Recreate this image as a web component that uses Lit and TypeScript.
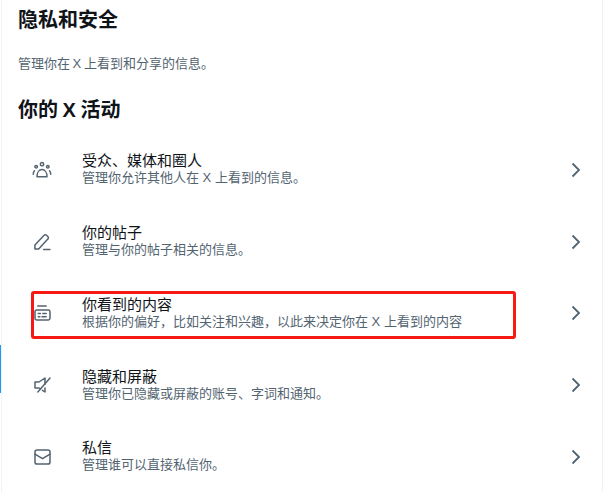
import { LitElement, html, css, svg } from 'lit';
import { customElement } from 'lit/decorators.js';

const ICONS = {
  people: svg`<circle cx="12" cy="5" r="2"/><circle cx="5" cy="8" r="1.5"/><circle cx="19" cy="8" r="1.5"/><path d="M6 20c0-5 2.500-8.500 6-8.500s6 3.500 6 8.500z"/><path d="M1.500 17c0-1.500.5-3 1.500-4M22.500 17c0-1.500-.5-3-1.500-4"/>`,
  pen: svg`<path d="M3.500 20.500v-5L14.500 4a2 2 0 0 1 3 0l1.500 1.500a2 2 0 0 1 0 3L8 20.500z"/><path d="M14 21h7.500"/>`,
  card: svg`<path d="M7 3.600h10"/><rect x="3.600" y="8.400" width="18" height="12" rx="2"/><path d="M7.500 12.500h2.500M7.500 16.500h2M13 12.500h4M12 16.500h5"/>`,
  mute: svg`<path d="M15.600 11V3.600L8.400 8.400H3.600v7.200h4.800l1.800 1.200"/><path d="M21.600 3.600L7 20.400M15.600 15.600v4.800l-3-2"/>`,
  mail: svg`<rect x="3.600" y="3.600" width="18" height="16.800" rx="2.500"/><path d="M3.600 8.500l9 5.500 9-5.500"/>`,
};

const ROWS = [
  { icon: ICONS.people, title: '受众、媒体和圈人', sub: '管理你允许其他人在 X 上看到的信息。' },
  { icon: ICONS.pen, title: '你的帖子', sub: '管理与你的帖子相关的信息。' },
  { icon: ICONS.card, title: '你看到的内容', sub: '根据你的偏好，比如关注和兴趣，以此来决定你在 X 上看到的内容' },
  { icon: ICONS.mute, title: '隐藏和屏蔽', sub: '管理你已隐藏或屏蔽的账号、字词和通知。' },
  { icon: ICONS.mail, title: '私信', sub: '管理谁可以直接私信你。' },
];

@customElement('app-root')
export class AppRoot extends LitElement {
  static styles = css`
    :host {
      display: block;
      position: relative;
      width: 612px;
      height: 492px;
      overflow: hidden;
      background: #fff;
      font-family: 'Liberation Sans', 'Noto Sans CJK SC', sans-serif;
    }
    .panel {
      box-sizing: border-box;
      width: 602px;
      height: 492px;
      margin-left: 1px;
      border-left: 1px solid #eff3f4;
      border-right: 1px solid #eff3f4;
      padding-top: 7px;
    }
    h1, h2 {
      margin: 0;
      padding-left: 16px;
      font-size: 20px;
      line-height: 26px;
      font-weight: 700;
      color: #0f1419;
      word-spacing: -1px;
    }
    .intro {
      margin: 0;
      padding: 22px 0 0 16px;
      font-size: 13px;
      line-height: 18px;
      color: #536471;
      word-spacing: -1px;
    }
    h2 { margin-top: 24px; }
    .rows { margin-top: 11px; }
    .row {
      display: flex;
      align-items: center;
      height: 71.750px;
      padding: 0 18px 0 30px;
    }
    .icon {
      width: 20px;
      height: 20px;
      fill: none;
      stroke: #536471;
      stroke-width: 1.800;
      stroke-linejoin: round;
      stroke-linecap: round;
      flex: none;
    }
    .text { flex: 1; margin: 0 0 1px 30px; }
    .title { font-size: 15px; line-height: 18px; color: #0f1419; }
    .sub { font-size: 13px; line-height: 16px; color: #536471; }
    .chev {
      width: 16px;
      height: 16px;
      fill: none;
      stroke: #536471;
      stroke-width: 1.800;
      flex: none;
    }
    .mark {
      position: absolute;
      left: 31px;
      top: 291px;
      width: 485px;
      height: 48px;
      box-sizing: border-box;
      border: 3px solid #f51a14;
      border-radius: 3px;
    }
    .tab {
      position: absolute;
      left: 0;
      top: 345px;
      width: 1px;
      height: 48px;
      background: #1d9bf0;
    }
  `;

  render() {
    return html`
      <div class="panel">
        <h1>隐私和安全</h1>
        <p class="intro">管理你在 X 上看到和分享的信息。</p>
        <h2>你的 X 活动</h2>
        <div class="rows">
          ${ROWS.map(r => html`
            <div class="row">
              <svg class="icon" viewBox="0 0 24 24">${r.icon}</svg>
              <div class="text">
                <div class="title">${r.title}</div>
                <div class="sub">${r.sub}</div>
              </div>
              <svg class="chev" viewBox="0 0 16 16"><path d="M4.500 1.500L11 8l-6.500 6.500"/></svg>
            </div>
          `)}
        </div>
      </div>
      <div class="tab"></div>
      <div class="mark"></div>
    `;
  }
}
